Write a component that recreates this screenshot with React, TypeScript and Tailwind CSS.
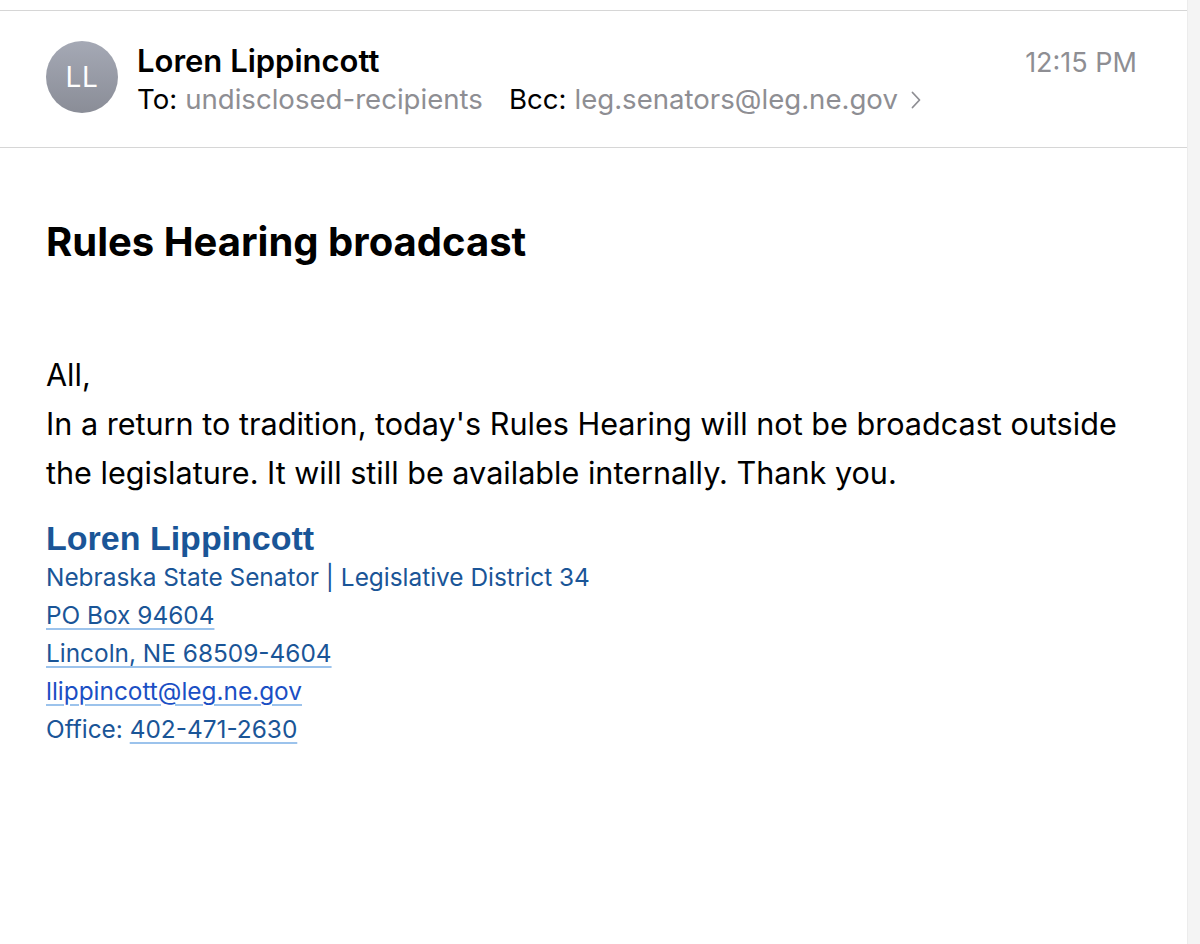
import React from 'react';

const sans = { fontFamily: 'Inter, "Noto Sans", sans-serif' };

function Avatar() {
  return (
    <div className="flex h-[72px] w-[72px] shrink-0 items-center justify-center rounded-full bg-gradient-to-b from-[#a5a9b5] to-[#8a8d97]">
      <span className="text-[28px] font-normal tracking-wide text-white">LL</span>
    </div>
  );
}

function Header() {
  return (
    <div className="flex h-[138px] items-start border-y border-[#d6d6d6] pl-[46px] pr-[50px] pt-[30px]">
      <Avatar />
      <div className="ml-[19px] flex-1">
        <div className="text-[31px] font-semibold leading-[40px] text-black">Loren Lippincott</div>
        <div className="mt-[1px] flex items-center text-[27.6px] leading-[34px]">
          <span className="text-black">To:</span>
          <span className="ml-[8px] text-[#8e8e93]">undisclosed-recipients</span>
          <span className="ml-[26px] text-black">Bcc:</span>
          <span className="ml-[8px] text-[#8e8e93]">leg.senators@leg.ne.gov</span>
          <svg className="ml-[13px] mt-[2px]" width="10" height="18" viewBox="0 0 10 18" fill="none">
            <path d="M1.5 1.5 L8.5 9 L1.5 16.5" stroke="#8e8e93" strokeWidth="1.8" strokeLinecap="round" strokeLinejoin="round" />
          </svg>
        </div>
      </div>
      <div className="mt-[2px] text-[27px] leading-[40px] text-[#8e8e93]">12:15 PM</div>
    </div>
  );
}

function SigLink({ children }: { children: React.ReactNode }) {
  return (
    <span className="underline decoration-[#9cc3ec] decoration-[1.5px] underline-offset-[4px]">{children}</span>
  );
}

export default function App() {
  return (
    <div className="flex h-[944px] w-[1200px] bg-white" style={sans}>
      <div className="flex-1 pt-[10px]">
        <Header />
        <div className="px-[46px]">
          <h1 className="mt-[70px] text-[40px] font-bold leading-[48px] text-black">Rules Hearing broadcast</h1>
          <div className="mt-[84px] text-[30.6px] leading-[49px] text-black">
            <p>All,</p>
            <p>
              In a return to tradition, today's Rules Hearing will not be broadcast outside the legislature. It will
              still be available internally. Thank you.
            </p>
          </div>
          <div className="mt-[21px] text-[#1a5597]">
            <div className="text-[34px] font-bold leading-[40px]" style={{ fontFamily: '"Liberation Sans", Arial, sans-serif' }}>
              Loren Lippincott
            </div>
            <div className="text-[24.4px] leading-[38px]">
              <div>Nebraska State Senator | Legislative District 34</div>
              <div><SigLink>PO Box 94604</SigLink></div>
              <div><SigLink>Lincoln, NE 68509-4604</SigLink></div>
              <div className="text-[#1b4fc4]"><SigLink>llippincott@leg.ne.gov</SigLink></div>
              <div>
                Office: <SigLink>402-471-2630</SigLink>
              </div>
            </div>
          </div>
        </div>
      </div>
      <div className="w-[13px] border-l border-[#ececec] bg-[#f4f4f4]" />
    </div>
  );
}
